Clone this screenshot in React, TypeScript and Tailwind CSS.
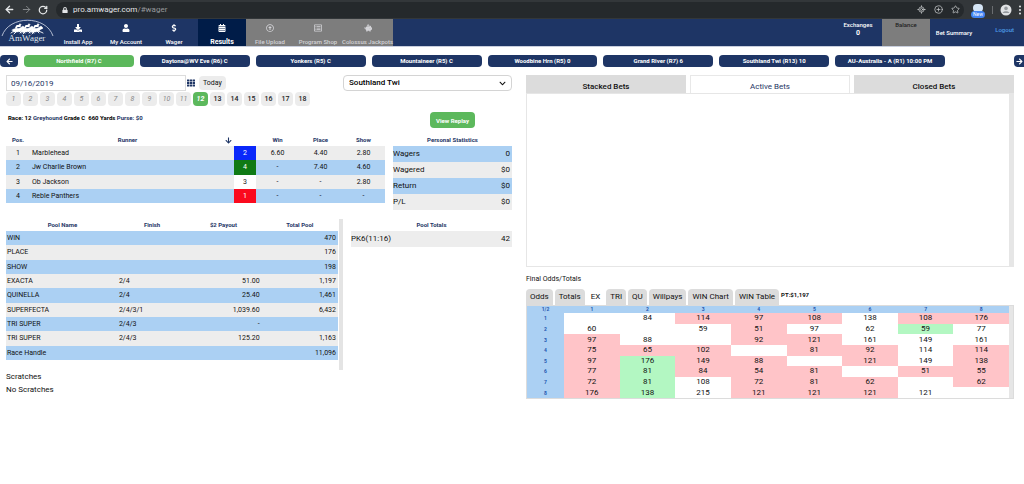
import type { ReactNode } from "react"
import { ArrowLeft, ArrowRight, CirclePlus, LocateFixed, RotateCw, Star } from "lucide-react"
import {
  FaArrowDown,
  FaArrowLeft,
  FaArrowRight,
  FaCalendarAlt,
  FaChevronDown,
  FaDollarSign,
  FaDownload,
  FaLock,
  FaPiggyBank,
  FaRegArrowAltCircleUp,
  FaRegListAlt,
  FaTh,
  FaUser,
} from "react-icons/fa"

const navItems = [
  { label: "Install App", icon: <FaDownload />, state: "normal" },
  { label: "My Account", icon: <FaUser />, state: "normal" },
  { label: "Wager", icon: <FaDollarSign />, state: "normal" },
  { label: "Results", icon: <FaCalendarAlt />, state: "active" },
  { label: "File Upload", icon: <FaRegArrowAltCircleUp />, state: "disabled" },
  { label: "Program Shop", icon: <FaRegListAlt />, state: "disabled" },
  { label: "Colossus Jackpots", icon: <FaPiggyBank />, state: "disabled" },
]

const navStyles: Record<string, string> = {
  normal: "text-[6px] font-medium text-white",
  active: "bg-[#001c48] text-[7px] font-bold text-white",
  disabled: "bg-[#7d7d7d] text-[6px] font-medium text-[#d4d4d8]",
}

const tracks = [
  "Northfield (R7) C",
  "Daytona@WV Eve (R6) C",
  "Yonkers (R5) C",
  "Mountaineer (R5) C",
  "Woodbine Hrn (R5) 0",
  "Grand River (R7) 6",
  "Southland Twi (R13) 10",
  "AU-Australia - A (R1) 10:00 PM",
]

const runners = [
  { pos: 1, name: "Marblehead", num: "2", box: "bg-[#0a28fa] text-white", win: "6.60", place: "4.40", show: "2.80" },
  { pos: 2, name: "Jw Charlie Brown", num: "4", box: "bg-[#0f7a14] text-white", win: "-", place: "7.40", show: "4.60" },
  { pos: 3, name: "Ob Jackson", num: "3", box: "bg-white text-[#222]", win: "-", place: "-", show: "2.80" },
  { pos: 4, name: "Reble Panthers", num: "1", box: "bg-[#fa0a1e] text-white", win: "-", place: "-", show: "-" },
]

const stats = [
  ["Wagers", "0"],
  ["Wagered", "$0"],
  ["Return", "$0"],
  ["P/L", "$0"],
]

const pools = [
  ["WIN", "", "", "470"],
  ["PLACE", "", "", "176"],
  ["SHOW", "", "", "198"],
  ["EXACTA", "2/4", "51.00", "1,197"],
  ["QUINELLA", "2/4", "25.40", "1,461"],
  ["SUPERFECTA", "2/4/3/1", "1,039.60", "6,432"],
  ["TRI SUPER", "2/4/3", "-", ""],
  ["TRI SUPER", "2/4/3", "125.20", "1,163"],
  ["Race Handle", "", "", "11,096"],
]

// p = pink cell, g = green cell, no prefix = plain
const exacta = [
  ["", "84", "p114", "p97", "p108", "138", "p108", "p176"],
  ["60", "", "59", "p51", "97", "62", "g59", "77"],
  ["p97", "88", "", "p92", "p121", "161", "149", "161"],
  ["p75", "p65", "p102", "", "p81", "p92", "114", "p114"],
  ["p97", "g176", "p149", "p88", "", "p121", "149", "p138"],
  ["p77", "g81", "p84", "p54", "p81", "", "p51", "p55"],
  ["p72", "g81", "108", "p72", "p81", "p62", "", "p62"],
  ["p176", "g138", "215", "p121", "p121", "p121", "121", ""],
]

const oddsTabs = ["Odds", "Totals", "EX", "TRI", "QU", "Willpays", "WIN Chart", "WIN Table"]

function cellColor(value: string) {
  if (value.startsWith("p")) return "bg-[#ffc4c8]"
  if (value.startsWith("g")) return "bg-[#b3f7c2]"
  return "bg-white"
}

function Horse({ x }: { x: number }) {
  return (
    <g transform={`translate(${x} 2)`} fill="white" stroke="white" strokeLinecap="round" strokeLinejoin="round">
      <path d="M1 9 C3 7 7 8 9 7 L12 5 L14 7 L13 8 L12 8 L10 10 C8 11 5 11 3 11 Z" strokeWidth="0.5" />
      <path d="M3 10 L0 12 M5 11 L3 13 M9 10 L12 11 L14 12 M8 10 L10 12" fill="none" strokeWidth="0.9" />
      <path d="M5 7 L6 5 L9 5" fill="none" strokeWidth="1.8" />
      <circle cx="9" cy="3.6" r="0.9" strokeWidth="0.4" />
    </g>
  )
}

function Logo() {
  return (
    <svg viewBox="0 0 54 27" className="h-[27px] w-[54px] shrink-0" role="img" aria-label="AmWager">
      <path d="M2 17 C9 -4 46 -4 53 17" fill="none" stroke="#c3cbdd" strokeWidth="0.9" />
      <Horse x={11} />
      <Horse x={20} />
      <Horse x={29} />
      <text x="27" y="22" textAnchor="middle" fill="#dfe4ee" fontSize="9" fontFamily="Liberation Serif, serif">
        AmWager
      </text>
    </svg>
  )
}

function Avatar() {
  return (
    <svg viewBox="0 0 12 12" className="h-3 w-3">
      <circle cx="6" cy="6" r="5.5" fill="#dfe1e3" />
      <circle cx="6" cy="4.4" r="1.8" fill="#95999d" />
      <path d="M2.6 9 C3 6.8 9 6.8 9.4 9 Z" fill="#95999d" />
    </svg>
  )
}

function MenuDots() {
  return (
    <svg viewBox="0 0 4 10" className="h-2.5 w-1" fill="currentColor">
      <circle cx="2" cy="1.5" r="1" />
      <circle cx="2" cy="5" r="1" />
      <circle cx="2" cy="8.5" r="1" />
    </svg>
  )
}

function BrowserBar() {
  return (
    <header className="flex h-[19px] items-center bg-[#33373a] pl-1 text-[#e4e6e8]">
      <div className="flex w-[52px] shrink-0 items-center gap-1.5">
        <button aria-label="Back"><ArrowLeft size={11} strokeWidth={3} /></button>
        <button aria-label="Forward" className="text-[#8c8f92]"><ArrowRight size={11} strokeWidth={2} /></button>
        <button aria-label="Reload"><RotateCw size={10} strokeWidth={3} /></button>
      </div>
      <div className="flex h-4 flex-1 items-center rounded-full bg-[#25292c] pl-1.5 pr-1">
        <FaLock size={6} />
        <span className="ml-[5px] flex-1 text-[8px]">
          pro.amwager.com<span className="text-[#96999c]">/#wager</span>
        </span>
        <div className="flex items-center gap-2 text-[#c5c8ca]">
          <LocateFixed size={9} strokeWidth={2} />
          <CirclePlus size={9} strokeWidth={2} />
          <Star size={9} strokeWidth={2} />
        </div>
      </div>
      <div className="ml-1.5 flex w-[54px] shrink-0 items-center justify-between pr-0.5">
        <span className="relative flex h-4 w-4 justify-center">
          <span className="mt-0.5 h-2 w-2.5 rounded-sm bg-[#d5e5f5]" />
          <span className="absolute bottom-0 rounded-sm bg-[#4285f4] px-0.5 text-[5px] leading-[7px] text-white">New</span>
        </span>
        <span className="h-2 w-px bg-[#6a6d70]" />
        <Avatar />
        <button aria-label="Menu"><MenuDots /></button>
      </div>
    </header>
  )
}

function NavBar() {
  return (
    <nav className="flex h-7 border-b border-[#c8cedd] bg-[#1e3565] text-[6px] font-medium">
      <Logo />
      {navItems.map((item) => (
        <button
          key={item.label}
          className={`flex w-12 shrink-0 flex-col items-center justify-between whitespace-nowrap pt-[5px] last-of-type:w-[51px] ${navStyles[item.state]}`}
        >
          <span className="text-[8px] leading-none">{item.icon}</span>
          <span className="leading-[8px]">{item.label}</span>
        </button>
      ))}
      <div className="ml-auto flex text-white">
        <div className="w-12 pt-px text-center">
          <div className="leading-[9px]">Exchanges</div>
          <div className="text-[7px] font-bold leading-[9px]">0</div>
        </div>
        <div className="w-12 bg-[#7d7d7d] pt-px text-center leading-[9px] text-[#222]">Balance</div>
        <a href="#summary" className="w-12 pt-[9px] text-center leading-[9px]">Bet Summary</a>
        <a href="#logout" className="w-[46px] pt-1.5 pr-2.5 text-right leading-[9px] text-[#4c9be8]">Logout</a>
      </div>
    </nav>
  )
}

function TrackBar() {
  return (
    <div className="mt-2 flex h-3 gap-1.5">
      <button aria-label="Previous tracks" className="flex w-[18px] shrink-0 items-center justify-center rounded-sm bg-[#1e3565] text-[7px] text-white">
        <FaArrowLeft />
      </button>
      <div className="grid flex-1 grid-cols-8 gap-1.5">
        {tracks.map((track, i) => (
          <button
            key={track}
            className={`whitespace-nowrap rounded-sm text-[6px] font-bold leading-3 text-white ${i === 0 ? "bg-[#5cb85c]" : "bg-[#1e3565]"}`}
          >
            {track}
          </button>
        ))}
      </div>
      <button aria-label="Next tracks" className="ml-[63px] flex w-2.5 shrink-0 items-center justify-center rounded-l-sm bg-[#1e3565] text-[7px] text-white">
        <FaArrowRight />
      </button>
    </div>
  )
}

function RacePicker() {
  return (
    <div>
      <div className="flex items-center">
        <input
          aria-label="Race date"
          defaultValue="09/16/2019"
          className="h-4 w-[180px] border border-[#dcdcdc] pl-1 text-[8px] text-[#1e3565]"
        />
        <button aria-label="Open calendar" className="ml-px text-[8px] text-[#1e3565]"><FaTh /></button>
        <button className="ml-1 h-3.5 rounded-sm bg-[#ececec] px-1 text-[7px] leading-3 text-[#111]">Today</button>
        <div className="relative ml-auto w-[169px]">
          <select
            aria-label="Track"
            className="block h-4 w-full appearance-none rounded-sm border border-[#d4d4d4] bg-white pl-[5px] text-[8px] font-medium text-black"
          >
            <option>Southland Twi</option>
          </select>
          <FaChevronDown size={7} className="pointer-events-none absolute right-1.5 top-[5px]" />
        </div>
      </div>
      <div className="mt-px flex gap-0.5">
        {Array.from({ length: 18 }, (_, i) => i + 1).map((n) => (
          <button
            key={n}
            className={`h-3.5 w-[15px] rounded-sm text-[7px] ${
              n < 12
                ? "bg-[#ececec] italic text-[#888]"
                : n === 12
                  ? "bg-[#5cb85c] font-bold italic text-white"
                  : "bg-[#ececec] font-medium text-[#222]"
            }`}
          >
            {n}
          </button>
        ))}
      </div>
    </div>
  )
}

function RunnersTable() {
  return (
    <table className="h-[69px] w-full table-fixed text-center text-[7px] leading-[10px]">
      <colgroup>
        <col className="w-6" />
        <col />
        <col className="w-[22px]" />
        <col className="w-[43px]" />
        <col className="w-[43px]" />
        <col className="w-[43px]" />
      </colgroup>
      <thead className="text-[6px] text-[#1e3565]">
        <tr className="h-3">
          <th>Pos.</th>
          <th>
            <div className="flex items-center pr-0.5">
              <span className="flex-1">Runner</span>
              <FaArrowDown size={7} />
            </div>
          </th>
          <th />
          <th>Win</th>
          <th>Place</th>
          <th>Show</th>
        </tr>
      </thead>
      <tbody>
        {runners.map((r) => (
          <tr key={r.pos} className="odd:bg-[#ededed] even:bg-[#abd0f3]">
            <td>{r.pos}</td>
            <td className="pl-0.5 text-left">{r.name}</td>
            <td className={r.box}>{r.num}</td>
            <td>{r.win}</td>
            <td>{r.place}</td>
            <td>{r.show}</td>
          </tr>
        ))}
      </tbody>
    </table>
  )
}

function PoolsTable() {
  return (
    <table className="mr-px h-[141px] flex-1 table-fixed self-start text-[7px] leading-[10px]">
      <colgroup>
        <col className="w-[34%]" />
        <col className="w-[20%]" />
        <col className="w-[23%]" />
        <col className="w-[23%]" />
      </colgroup>
      <thead className="text-[6px] text-[#1e3565]">
        <tr className="h-3">
          <th>Pool Name</th>
          <th>Finish</th>
          <th>$2 Payout</th>
          <th>Total Pool</th>
        </tr>
      </thead>
      <tbody>
        {pools.map(([name, finish, payout, total], i) => (
          <tr key={i} className="odd:bg-[#abd0f3] even:bg-[#ededed]">
            <td className="pl-px">{name}</td>
            <td>{finish}</td>
            <td className="pr-0.5 text-right">{payout}</td>
            <td className="pr-0.5 text-right">{total}</td>
          </tr>
        ))}
      </tbody>
    </table>
  )
}

function SideTable({ title, rows }: { title: string; rows: ReactNode }) {
  return (
    <table className="w-full text-[8px]">
      <thead>
        <tr className="h-3 text-[6px] leading-[10px] text-[#1e3565]">
          <th colSpan={2}>{title}</th>
        </tr>
      </thead>
      <tbody>{rows}</tbody>
    </table>
  )
}

function BetsPanel() {
  return (
    <section>
      <div className="flex gap-1 text-[8px]">
        {["Stacked Bets", "Active Bets", "Closed Bets"].map((tab) => (
          <button
            key={tab}
            className={`h-[18px] flex-1 border border-b-0 pt-1 ${tab === "Active Bets" ? "border-[#e8e8e8] text-[#1e3565]" : "border-[#dcdcdc] bg-[#dcdcdc] font-medium"}`}
          >
            {tab}
          </button>
        ))}
      </div>
      <div className="flex h-[174px] justify-end border border-[#e6e6e6]">
        <div className="w-1 bg-[#e6e6e6]" />
      </div>
    </section>
  )
}

function OddsPanel() {
  return (
    <section className="mt-1.5">
      <h2 className="text-[7px] leading-3">Final Odds/Totals</h2>
      <div className="mt-1 flex gap-0.5 text-[8px]">
        {oddsTabs.map((tab) => (
          <button key={tab} className={`h-4 rounded-t-sm px-1 ${tab === "EX" ? "bg-white" : "bg-[#dcdcdc]"}`}>
            {tab}
          </button>
        ))}
        <span className="text-[6px] font-bold leading-3">PT:$1,197</span>
      </div>
      <div className="flex border border-[#dcdcdc]">
        <table className="h-[92px] flex-1 table-fixed text-center text-[8px] leading-[10px]">
          <thead>
            <tr className="bg-[#abd0f3] text-[5px] leading-[7px] text-[#2457b0]">
              <th className="w-[37px]">1/2</th>
              {[1, 2, 3, 4, 5, 6, 7, 8].map((n) => (
                <th key={n}>{n}</th>
              ))}
            </tr>
          </thead>
          <tbody>
            {exacta.map((row, i) => (
              <tr key={i}>
                <th className="bg-[#abd0f3] text-[5px] text-[#2457b0]">{i + 1}</th>
                {row.map((value, j) => (
                  <td key={j} className={cellColor(value)}>{value.replace(/[pg]/, "")}</td>
                ))}
              </tr>
            ))}
          </tbody>
        </table>
        <div className="w-1 bg-[#e6e6e6]" />
      </div>
    </section>
  )
}

export default function App() {
  return (
    <div className="min-h-screen overflow-hidden bg-white font-[Roboto,sans-serif] text-[#111]">
      <BrowserBar />
      <NavBar />
      <TrackBar />
      <main className="mt-2 grid grid-cols-[506fr_488fr] gap-3.5 pl-1.5 pr-2.5">
        <div>
          <RacePicker />
          <div className="mt-1.5 flex gap-2">
            <div className="flex-1">
              <p className="mb-2.5 pl-0.5 text-[6px] font-bold leading-3 text-black">
                Race: 12 <span className="text-[#1e3565]">Greyhound</span> Grade C&nbsp; 660 Yards{" "}
                <span className="text-[#1e3565]">Purse: $0</span>
              </p>
              <RunnersTable />
            </div>
            <div className="w-[119px]">
              <button className="mx-auto mb-1.5 block h-4 rounded-sm bg-[#5cb85c] px-1.5 text-[6px] font-bold text-white">
                View Replay
              </button>
              <SideTable
                title="Personal Statistics"
                rows={stats.map(([label, value]) => (
                  <tr key={label} className="h-4 odd:bg-[#abd0f3] even:bg-[#ededed]">
                    <td>{label}</td>
                    <td className="pr-0.5 text-right">{value}</td>
                  </tr>
                ))}
              />
            </div>
          </div>
          <div className="mt-[9px] flex gap-2">
            <div className="flex h-[151px] flex-1">
              <PoolsTable />
              <div className="w-1 bg-[#e4e4e4]" />
            </div>
            <div className="w-[161px]">
              <SideTable
                title="Pool Totals"
                rows={
                  <tr className="h-4 bg-[#ededed]">
                    <td>PK6(11:16)</td>
                    <td className="pr-0.5 text-right">42</td>
                  </tr>
                }
              />
            </div>
          </div>
          <div className="text-[8px] leading-[13px]">
            <h2>Scratches</h2>
            <p>No Scratches</p>
          </div>
        </div>
        <div>
          <BetsPanel />
          <OddsPanel />
        </div>
      </main>
    </div>
  )
}
